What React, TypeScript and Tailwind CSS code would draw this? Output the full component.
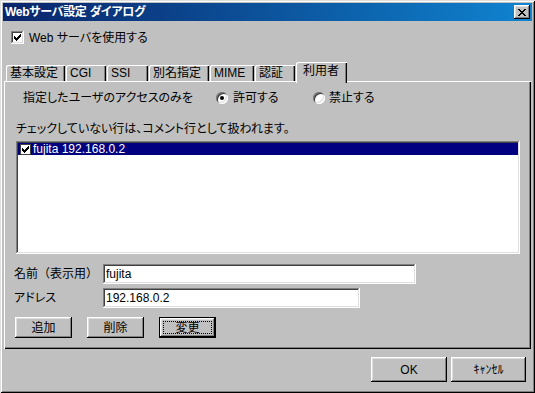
import React from "react";

const raised =
  "shadow-[inset_-1px_-1px_#000,inset_1px_1px_#fff,inset_-2px_-2px_#808080,inset_2px_2px_#dfdfdf]";
const sunken =
  "shadow-[inset_-1px_-1px_#fff,inset_1px_1px_#808080,inset_-2px_-2px_#dfdfdf,inset_2px_2px_#404040]";

function CheckMark({ color = "#000" }: { color?: string }) {
  return (
    <svg width="13" height="13" viewBox="0 0 13 13" shapeRendering="crispEdges">
      <path
        fill={color}
        d="M3 5h1v3h-1z M4 6h1v3h-1z M5 7h1v3h-1z M6 6h1v3h-1z M7 5h1v3h-1z M8 4h1v3h-1z M9 3h1v3h-1z"
      />
    </svg>
  );
}

function Checkbox() {
  return (
    <div className={`w-[13px] h-[13px] bg-white shrink-0 ${sunken}`}>
      <CheckMark />
    </div>
  );
}

function SmallCheckbox() {
  return (
    <div className="w-[11px] h-[11px] bg-white shrink-0 border border-[#404040] flex items-center justify-center overflow-hidden">
      <svg width="9" height="9" viewBox="0 0 9 9" shapeRendering="crispEdges">
        <path
          fill="#000"
          d="M1 3h1v3h-1z M2 4h1v3h-1z M3 5h1v3h-1z M4 4h1v3h-1z M5 3h1v3h-1z M6 2h1v3h-1z M7 1h1v3h-1z"
        />
      </svg>
    </div>
  );
}

function Radio({ checked }: { checked?: boolean }) {
  return (
    <div
      className={`w-[12px] h-[12px] rounded-full bg-white shrink-0 flex items-center justify-center shadow-[inset_1px_1px_#808080,inset_-1px_-1px_#fff,inset_2px_2px_#404040,inset_-2px_-2px_#dfdfdf]`}
    >
      {checked && <div className="w-[4px] h-[4px] rounded-full bg-black" />}
    </div>
  );
}

function CloseGlyph() {
  return (
    <svg width="8" height="7" viewBox="0 0 8 7" shapeRendering="crispEdges">
      <path
        fill="#000"
        d="M0 0h2v1h-2z M6 0h2v1h-2z M1 1h2v1h-2z M5 1h2v1h-2z M2 2h4v1h-4z M3 3h2v1h-2z M2 4h4v1h-4z M1 5h2v1h-2z M5 5h2v1h-2z M0 6h2v1h-2z M6 6h2v1h-2z"
      />
    </svg>
  );
}

function Tab({ label, w }: { label: string; w: string }) {
  return (
    <div
      className={`${w} h-[16px] flex items-center pl-[4px] shrink-0 rounded-tl-[2px] shadow-[inset_1px_1px_#fff,inset_-1px_0_#000,inset_-2px_0_#808080]`}
    >
      {label}
    </div>
  );
}

export default function App() {
  return (
    <div className="w-[535px] h-[393px] bg-[#c0c0c0] p-[2px] flex flex-col text-[12px] leading-[12px] text-black [font-family:'Liberation_Sans','Noto_Sans_CJK_JP',sans-serif] [font-feature-settings:'palt'] shadow-[inset_1px_1px_#dfdfdf,inset_-1px_-1px_#000,inset_2px_2px_#fff,inset_-2px_-2px_#808080]">
      {/* Title bar */}
      <div className="mx-[1px] mt-[1px] h-[18px] shrink-0 flex items-center justify-between pl-[2px] pr-[2px] bg-gradient-to-r from-[#0a246a] to-[#1084d0]">
        <span className="text-white font-bold tracking-[-0.3px]">Webサーバ設定 ダイアログ</span>
        <div className={`w-[16px] h-[14px] bg-[#c0c0c0] flex items-center justify-center ${raised}`}>
          <CloseGlyph />
        </div>
      </div>

      {/* Checkbox row */}
      <div className="mt-[10px] ml-[9px] h-[13px] flex items-center gap-[5px] shrink-0">
        <Checkbox />
        <span>Web サーバを使用する</span>
      </div>

      {/* Tabs */}
      <div className="mt-[18px] ml-[4px] h-[19px] flex items-end gap-[1px] shrink-0">
        <Tab label="基本設定" w="w-[59px]" />
        <Tab label="CGI" w="w-[40px]" />
        <Tab label="SSI" w="w-[41px]" />
        <Tab label="別名指定" w="w-[60px]" />
        <Tab label="MIME" w="w-[44px]" />
        <Tab label="認証" w="w-[40px]" />
        <div className="relative z-10 w-[51px] h-[21px] -mb-[2px] bg-[#c0c0c0] flex items-start pt-[3px] pl-[7px] shrink-0 rounded-tl-[2px] shadow-[inset_1px_1px_#fff,inset_-1px_0_#000,inset_-2px_0_#808080]">
          利用者
        </div>
      </div>

      {/* Panel */}
      <div className="mx-[2px] h-[268px] shrink-0 flex flex-col shadow-[inset_1px_1px_#fff,inset_-1px_-1px_#000,inset_-2px_-2px_#808080]">
        <div className="mt-[11px] h-[12px] pl-[19px] flex items-center">
          <span className="w-[193px]">指定したユーザのアクセスのみを</span>
          <div className="w-[97px] flex items-center gap-[5px]">
            <Radio checked />
            <span>許可する</span>
          </div>
          <div className="flex items-center gap-[4px]">
            <Radio />
            <span>禁止する</span>
          </div>
        </div>

        <div className="mt-[19px] h-[12px] pl-[12px]">チェックしていない行は、コメント行として扱われます。</div>

        <div className={`mt-[6px] ml-[12px] w-[504px] h-[113px] bg-white p-[2px] ${sunken}`}>
          <div className="h-[12px] bg-[#000080] flex items-center text-white">
            <div className="ml-[2px]">
              <SmallCheckbox />
            </div>
            <span className="ml-[2px]">fujita 192.168.0.2</span>
          </div>
        </div>

        <div className="mt-[10px] h-[20px] flex items-center">
          <span className="pl-[10px] w-[99px] [font-feature-settings:normal]">名前（表示用）</span>
          <div className={`w-[313px] h-[20px] bg-white flex items-center pl-[3px] ${sunken}`}>fujita</div>
        </div>

        <div className="mt-[4px] h-[20px] flex items-center">
          <span className="pl-[10px] w-[99px]">アドレス</span>
          <div className={`w-[257px] h-[20px] bg-white flex items-center pl-[3px] ${sunken}`}>192.168.0.2</div>
        </div>

        <div className="mt-[9px] ml-[11px] h-[21px] flex items-center gap-[15px]">
          <div className={`w-[57px] h-[21px] flex items-center justify-center ${raised}`}>追加</div>
          <div className={`w-[57px] h-[21px] flex items-center justify-center ${raised}`}>削除</div>
          <div className="w-[57px] h-[21px] border border-black">
            <div className={`w-full h-full p-[3px] ${raised}`}>
              <div className="w-full h-full border border-dotted border-black flex items-center justify-center">
                変更
              </div>
            </div>
          </div>
        </div>
      </div>

      {/* Footer */}
      <div className="flex-1 flex justify-end items-start pt-[8px] pr-[7px] gap-[4px]">
        <div className={`w-[76px] h-[25px] flex items-center justify-center ${raised}`}>OK</div>
        <div className={`w-[75px] h-[25px] flex items-center justify-center ${raised}`}>ｷｬﾝｾﾙ</div>
      </div>
    </div>
  );
}
